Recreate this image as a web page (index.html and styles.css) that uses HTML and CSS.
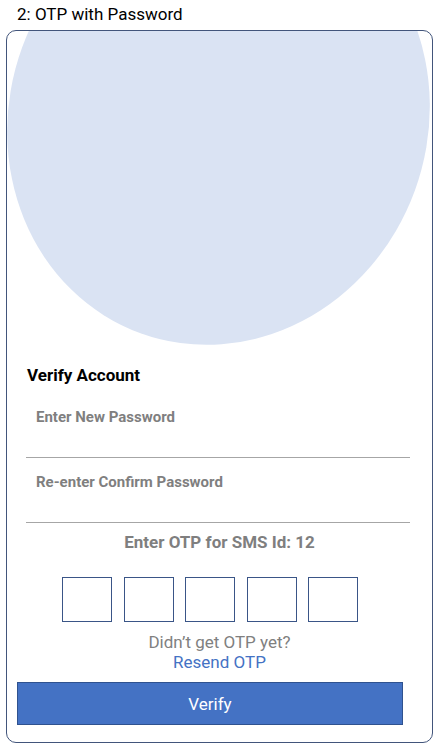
FILE: index.html
```html
<!DOCTYPE html>
<html lang="en">
<head>
<meta charset="utf-8">
<title>OTP with Password</title>
<link rel="stylesheet" href="styles.css">
</head>
<body>
<div class="title">2: OTP with Password</div>
<div class="card">
  <div class="hero">
    <svg class="blob" width="425" height="314" viewBox="0 0 425 314" xmlns="http://www.w3.org/2000/svg">
      <ellipse cx="211.5" cy="88" rx="209" ry="228" fill="#dae3f3" transform="rotate(20 211.5 88)"/>
    </svg>
  </div>
  <div class="heading">Verify Account</div>
  <div class="field"><span class="label">Enter New Password</span></div>
  <div class="field"><span class="label">Re-enter Confirm Password</span></div>
  <div class="otp-title">Enter OTP for SMS Id: 12</div>
  <div class="otp-row">
    <div class="otp-box"></div>
    <div class="otp-box"></div>
    <div class="otp-box"></div>
    <div class="otp-box"></div>
    <div class="otp-box"></div>
  </div>
  <div class="hint">Didn’t get OTP yet?</div>
  <div class="resend">Resend OTP</div>
  <div class="btn">Verify</div>
</div>
</body>
</html>
```
FILE: styles.css
```css
* { box-sizing: border-box; }
html, body { margin: 0; padding: 0; background: #ffffff; }
body {
  font-family: Roboto, "Liberation Sans", Arial, sans-serif;
  font-size: 17px;
  line-height: 20px;
  color: #000;
}
.title {
  padding: 4px 0 0 17px;
  height: 24px;
}
.card {
  margin: 6px 0 0 6px;
  width: 427px;
  height: 713px;
  border: 1px solid #42557b;
  border-radius: 10px;
  overflow: hidden;
}
.hero {
  height: 314px;
  overflow: hidden;
}
.blob { display: block; }
.heading {
  margin: 20px 0 0 20px;
  font-weight: 700;
}
.field {
  margin-left: 19px;
  width: 384px;
  height: 65px;
  border-bottom: 1px solid #a6a6a6;
  padding: 14px 0 0 10px;
  font-size: 15px;
  line-height: 20px;
  font-weight: 700;
  color: #7f7f7f;
}
.heading + .field { margin-top: 8px; }
.otp-title {
  margin-top: 9px;
  text-align: center;
  font-weight: 700;
  color: #7f7f7f;
}
.otp-row {
  display: flex;
  gap: 11.5px;
  margin: 25px 0 0 55px;
}
.otp-box {
  width: 50px;
  height: 45px;
  border: 1px solid #3a5587;
}
.hint {
  margin-top: 9.5px;
  text-align: center;
  color: #808080;
}
.resend {
  text-align: center;
  color: #4472c4;
}
.btn {
  margin: 10.5px 0 0 10px;
  width: 386px;
  height: 43px;
  background: #4472c4;
  border: 1px solid #2f528f;
  color: #ffffff;
  display: flex;
  align-items: center;
  justify-content: center;
}
```
